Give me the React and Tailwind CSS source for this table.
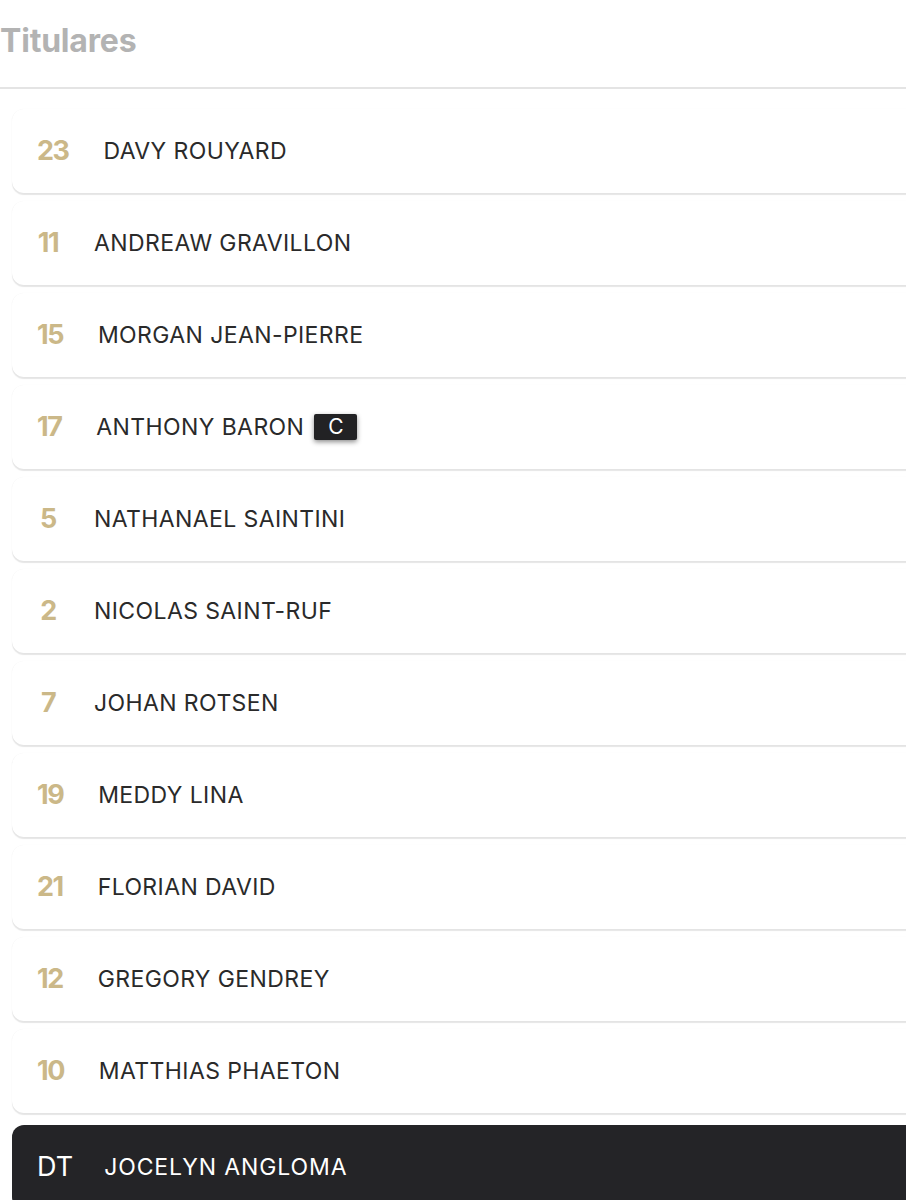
import React from "react";

const players = [
  ["23", "DAVY ROUYARD"],
  ["11", "ANDREAW GRAVILLON"],
  ["15", "MORGAN JEAN-PIERRE"],
  ["17", "ANTHONY BARON", true],
  ["5", "NATHANAEL SAINTINI"],
  ["2", "NICOLAS SAINT-RUF"],
  ["7", "JOHAN ROTSEN"],
  ["19", "MEDDY LINA"],
  ["21", "FLORIAN DAVID"],
  ["12", "GREGORY GENDREY"],
  ["10", "MATTHIAS PHAETON"],
];

export default function App() {
  return (
    <div
      className="w-[906px] h-[1200px] overflow-hidden bg-white"
      style={{ fontFamily: "Inter, 'Open Sans', sans-serif" }}
    >
      <div className="h-[87px] pt-[21px] text-[32px] font-bold text-[#b3b3b3] leading-[40px] tracking-[-0.2px]">
        Titulares
      </div>
      <div className="h-[2px] bg-[#e4e4e4]" />
      <div className="flex flex-col gap-[8px] pt-[20px] pl-3">
        {players.map(([n, name, cap]) => (
          <div
            key={name}
            className="h-[84px] mr-[-30px] flex items-center pl-[25px] rounded-[12px] bg-white shadow-[0_1.5px_1px_rgba(0,0,0,0.10),0_0_1px_rgba(0,0,0,0.05)]"
          >
            <span className="min-w-[22px] text-center text-[27px] font-bold text-[#cbb888] tracking-[-1.5px]">
              {n}
            </span>
            <span className="ml-[35px] text-[23px] text-[#2a2a2a] tracking-[0.4px]">
              {name}
            </span>
            {cap && (
              <span className="ml-[10px] w-[43px] h-[26px] flex items-center justify-center bg-[#222224] text-white text-[21px] rounded-[2px] shadow-[0_2px_5px_rgba(0,0,0,0.45)]">
                C
              </span>
            )}
          </div>
        ))}
        <div className="h-[84px] mt-[4px] mr-[-30px] flex items-center pl-[25px] rounded-[12px] bg-[#242427]">
          <span className="text-[27px] text-white">DT</span>
          <span className="ml-[31px] text-[23px] text-white tracking-[0.9px]">
            JOCELYN ANGLOMA
          </span>
        </div>
      </div>
    </div>
  );
}
